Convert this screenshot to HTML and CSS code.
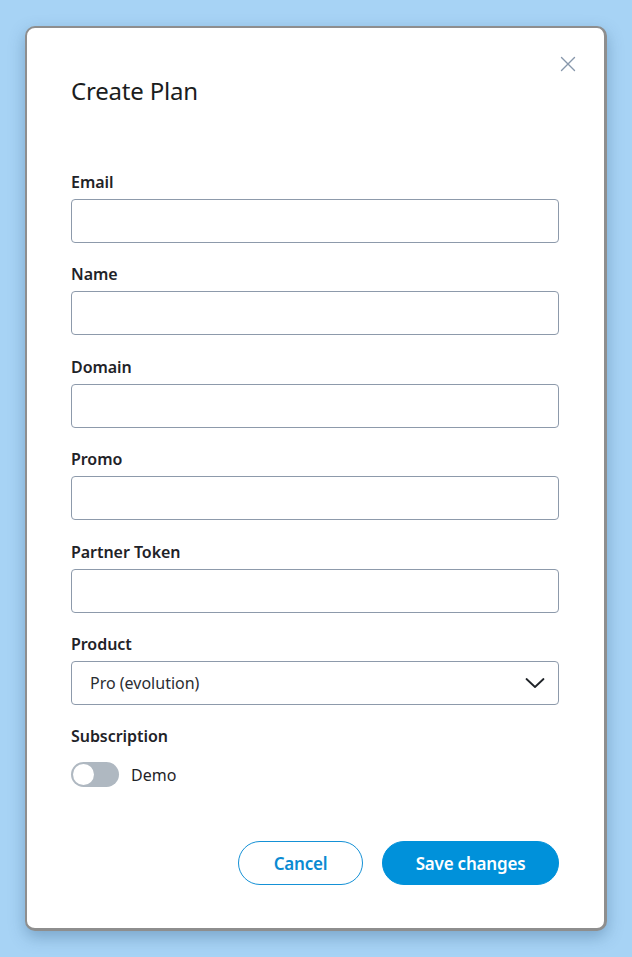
FILE: index.html
```html
<!DOCTYPE html>
<html lang="en">
<head>
<meta charset="utf-8">
<title>Create Plan</title>
<link rel="stylesheet" href="styles.css">
</head>
<body>
  <div class="backdrop">
    <div class="modal" role="dialog" aria-labelledby="modal-title">
      <button class="close" type="button" aria-label="Close">
        <svg width="16" height="16" viewBox="0 0 16 16" fill="none" stroke="#8797ab" stroke-width="1.4" stroke-linecap="round">
          <path d="M1.5 1.5 L14.5 14.5 M14.5 1.5 L1.5 14.5"/>
        </svg>
      </button>
      <h2 class="title" id="modal-title">Create Plan</h2>

      <form class="form">
        <div class="field">
          <label class="label" for="email">Email</label>
          <input class="input" id="email" type="text">
        </div>
        <div class="field">
          <label class="label" for="name">Name</label>
          <input class="input" id="name" type="text">
        </div>
        <div class="field">
          <label class="label" for="domain">Domain</label>
          <input class="input" id="domain" type="text">
        </div>
        <div class="field">
          <label class="label" for="promo">Promo</label>
          <input class="input" id="promo" type="text">
        </div>
        <div class="field">
          <label class="label" for="token">Partner Token</label>
          <input class="input" id="token" type="text">
        </div>
        <div class="field">
          <label class="label" for="product">Product</label>
          <div class="select">
            <span class="select-value">Pro (evolution)</span>
            <svg class="chevron" width="20" height="12" viewBox="0 0 20 12" fill="none" stroke="#1f2328" stroke-width="1.8" stroke-linecap="round" stroke-linejoin="round">
              <path d="M1.5 2 L10 10 L18.5 2"/>
            </svg>
          </div>
        </div>
        <div class="field field-last">
          <span class="label">Subscription</span>
          <div class="switch-row">
            <span class="switch"><span class="knob"></span></span>
            <span class="switch-label">Demo</span>
          </div>
        </div>

        <div class="actions">
          <button class="btn btn-outline" type="button">Cancel</button>
          <button class="btn btn-primary" type="button">Save changes</button>
        </div>
      </form>
    </div>
  </div>
</body>
</html>
```

FILE: styles.css
```css
* {
  box-sizing: border-box;
}

html, body {
  margin: 0;
  padding: 0;
}

body {
  background: #a7d3f5;
  font-family: "Noto Sans", "Open Sans", sans-serif;
  color: #1f2328;
  width: 632px;
  height: 957px;
  overflow: hidden;
}

.backdrop {
  padding: 26px 0 0 25px;
}

.modal {
  position: relative;
  width: 582px;
  height: 905px;
  background: #ffffff;
  border: 2px solid #8e8e8e;
  border-right-width: 3px;
  border-bottom-width: 3px;
  border-radius: 10px;
  box-shadow: 0 6px 16px rgba(40, 80, 120, 0.35);
  padding: 47px 45px 45px 44px;
}

.close {
  position: absolute;
  top: 28px;
  right: 28px;
  width: 16px;
  height: 16px;
  padding: 0;
  border: 0;
  background: none;
  display: flex;
}

.title {
  margin: 0;
  font-size: 24px;
  line-height: 32px;
  font-weight: 400;
  color: #1b1d20;
  letter-spacing: -0.2px;
}

.form {
  margin-top: 63px;
  display: flex;
  flex-direction: column;
}

.field {
  display: flex;
  flex-direction: column;
  margin-bottom: 19.4px;
}

.label {
  font-size: 16px;
  line-height: 24px;
  font-weight: 600;
  color: #1f2328;
  margin-bottom: 5px;
  letter-spacing: -0.05px;
}

.input,
.select {
  height: 44px;
  width: 100%;
  border: 1px solid #8d9aab;
  border-radius: 4px;
  background: #ffffff;
  font: inherit;
}

.select {
  display: flex;
  align-items: center;
  justify-content: space-between;
  padding: 0 13px 0 18px;
}

.select-value {
  font-size: 16px;
  color: #2a2d31;
}

.chevron {
  display: block;
}

.field-last {
  margin-bottom: 0;
}

.field-last .label {
  margin-bottom: 14px;
}

.switch-row {
  display: flex;
  align-items: center;
  gap: 12px;
}

.switch {
  width: 48px;
  height: 25px;
  border-radius: 13px;
  background: #afb8c1;
  padding: 2px;
  display: flex;
}

.knob {
  width: 21px;
  height: 21px;
  border-radius: 50%;
  background: #ffffff;
}

.switch-label {
  font-size: 16px;
  color: #1f2328;
}

.actions {
  display: flex;
  justify-content: flex-end;
  gap: 19px;
  margin-top: 54px;
}

.btn {
  height: 44px;
  border-radius: 22px;
  font-family: inherit;
  font-size: 17px;
  font-weight: 600;
  letter-spacing: -0.2px;
  cursor: pointer;
}

.btn-outline {
  width: 125px;
  background: #ffffff;
  border: 1px solid #1591d6;
  color: #0a8ad2;
}

.btn-primary {
  width: 177px;
  background: #0091da;
  border: 1px solid #0091da;
  color: #ffffff;
}
```
